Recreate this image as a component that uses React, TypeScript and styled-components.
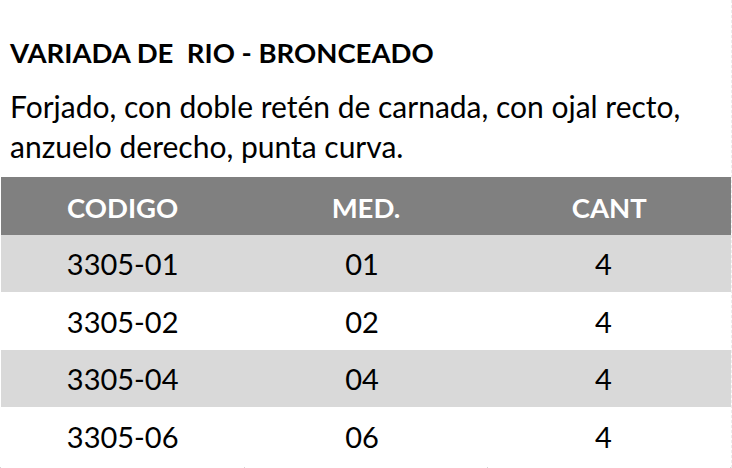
import React from "react";
import styled, { createGlobalStyle } from "styled-components";

const GlobalStyle = createGlobalStyle`
	html, body {
		margin: 0;
		padding: 0;
		background: #ffffff;
	}
	body {
		font-family: Lato, "Open Sans", sans-serif;
		color: #000000;
	}
`

const Page = styled.div`
	width: 732px;
	height: 468px;
	overflow: hidden;
	display: flex;
	flex-direction: column;
	border-right: 1px dashed #ececec;
	box-sizing: border-box;
	& > * {
		flex-shrink: 0;
	}
`

const Intro = styled.div`
	padding: 37px 0 0 10px;
	height: 177px;
	box-sizing: border-box;
`

const Title = styled.h1`
	margin: 0;
	font-size: 27.5px;
	font-weight: 700;
	line-height: 32px;
	white-space: pre;
`

const Description = styled.p`
	margin: 17px 0 0;
	font-size: 30px;
	line-height: 40px;
	font-weight: 400;
`

const Table = styled.div`
	margin-left: 1px;
	width: 730px;
	display: flex;
	flex-direction: column;
`

const Row = styled.div<{ $bg: string }>`
	display: grid;
	grid-template-columns: 1fr 1fr 1fr;
	height: 57.5px;
	background: ${(p) => p.$bg};
	align-items: center;
`

const HeadCell = styled.div`
	text-align: center;
	color: #ffffff;
	font-weight: 700;
	font-size: 27.5px;
	padding-top: 3px;
`

const Cell = styled.div<{ $shift?: number }>`
	text-align: center;
	font-size: 29px;
	padding-top: 1px;
	padding-right: ${(p) => p.$shift || 0}px;
`

const Stubs = styled.div`
	display: grid;
	grid-template-columns: 1fr 1fr 1fr;
	height: 5px;
	margin-top: 2px;
`

const Stub = styled.div`
	border-left: 1px solid #d6d6d6;
	&:last-child {
		border-right: 1px solid #d6d6d6;
	}
`

const rows = [
	{ code: "3305-01", med: "01", cant: "4" },
	{ code: "3305-02", med: "02", cant: "4" },
	{ code: "3305-04", med: "04", cant: "4" },
	{ code: "3305-06", med: "06", cant: "4" },
];

function App() {
	return (
		<>
			<GlobalStyle />
			<Page>
				<Intro>
					<Title>VARIADA DE  RIO - BRONCEADO</Title>
					<Description>
						Forjado, con doble retén de carnada, con ojal recto,
						<br />
						anzuelo derecho, punta curva.
					</Description>
				</Intro>
				<Table>
					<Row $bg="#808080">
						<HeadCell>CODIGO</HeadCell>
						<HeadCell>MED.</HeadCell>
						<HeadCell>CANT</HeadCell>
					</Row>
					{rows.map((r, i) => (
						<Row key={r.code} $bg={i % 2 === 0 ? "#d9d9d9" : "#ffffff"}>
							<Cell>{r.code}</Cell>
							<Cell $shift={8}>{r.med}</Cell>
							<Cell $shift={12}>{r.cant}</Cell>
						</Row>
					))}
				</Table>
				<Stubs>
					<Stub />
					<Stub />
					<Stub />
				</Stubs>
			</Page>
		</>
	);
}

export default App;
